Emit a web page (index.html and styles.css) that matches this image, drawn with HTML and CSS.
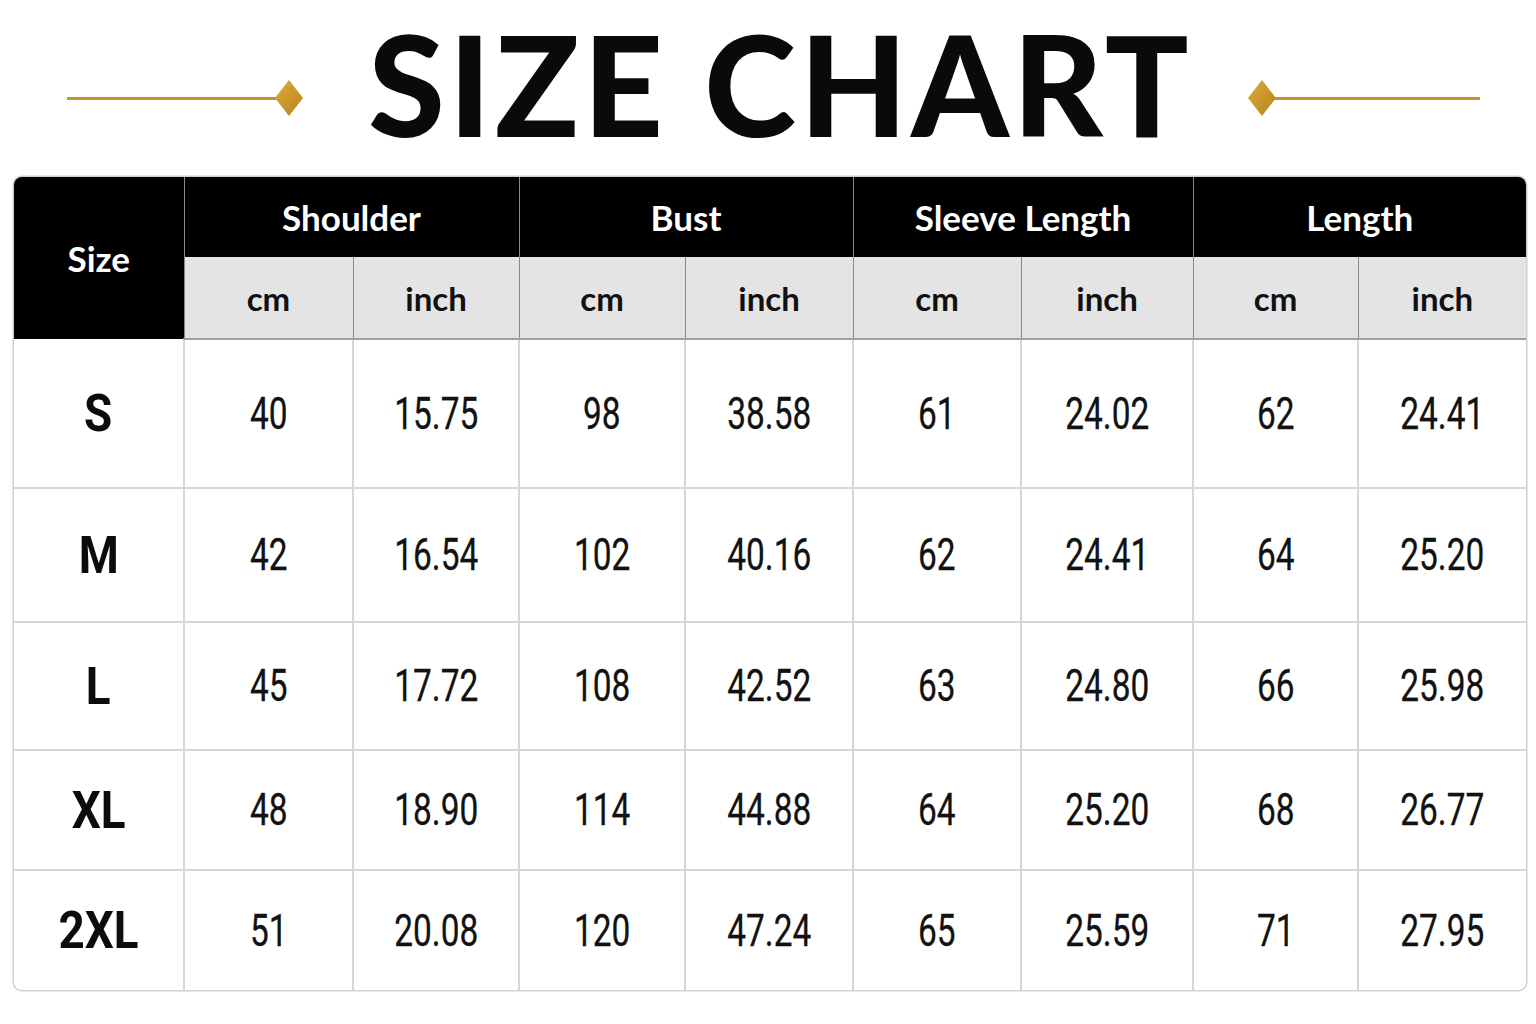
FILE: index.html
```html
<!DOCTYPE html>
<html lang="en">
<head>
<meta charset="utf-8">
<title>Size Chart</title>
<link rel="stylesheet" href="styles.css">
</head>
<body>
<header class="title-bar">
  <div class="ornament ornament-left"><span class="line"></span><span class="diamond"></span></div>
  <h1 class="title">SIZE CHART</h1>
  <div class="ornament ornament-right"><span class="diamond"></span><span class="line"></span></div>
</header>
<div class="chart">
  <table class="size-table">
    <colgroup>
      <col class="c1"><col class="c2"><col class="c3"><col class="c4"><col class="c5"><col class="c6"><col class="c7"><col class="c8"><col class="c9">
    </colgroup>
    <thead>
      <tr class="group-row">
        <th class="size-head" rowspan="2">Size</th>
        <th colspan="2">Shoulder</th>
        <th colspan="2">Bust</th>
        <th colspan="2">Sleeve Length</th>
        <th colspan="2">Length</th>
      </tr>
      <tr class="unit-row">
        <th>cm</th><th>inch</th>
        <th>cm</th><th>inch</th>
        <th>cm</th><th>inch</th>
        <th>cm</th><th>inch</th>
      </tr>
    </thead>
    <tbody>
      <tr class="r-s"><th><span>S</span></th><td><span>40</span></td><td><span>15.75</span></td><td><span>98</span></td><td><span>38.58</span></td><td><span>61</span></td><td><span>24.02</span></td><td><span>62</span></td><td><span>24.41</span></td></tr>
      <tr class="r-m"><th><span>M</span></th><td><span>42</span></td><td><span>16.54</span></td><td><span>102</span></td><td><span>40.16</span></td><td><span>62</span></td><td><span>24.41</span></td><td><span>64</span></td><td><span>25.20</span></td></tr>
      <tr class="r-l"><th><span>L</span></th><td><span>45</span></td><td><span>17.72</span></td><td><span>108</span></td><td><span>42.52</span></td><td><span>63</span></td><td><span>24.80</span></td><td><span>66</span></td><td><span>25.98</span></td></tr>
      <tr class="r-xl"><th><span>XL</span></th><td><span>48</span></td><td><span>18.90</span></td><td><span>114</span></td><td><span>44.88</span></td><td><span>64</span></td><td><span>25.20</span></td><td><span>68</span></td><td><span>26.77</span></td></tr>
      <tr class="r-2xl"><th><span>2XL</span></th><td><span>51</span></td><td><span>20.08</span></td><td><span>120</span></td><td><span>47.24</span></td><td><span>65</span></td><td><span>25.59</span></td><td><span>71</span></td><td><span>27.95</span></td></tr>
    </tbody>
  </table>
</div>
</body>
</html>
```
FILE: styles.css
```css
html, body {
  margin: 0;
  padding: 0;
  background: #ffffff;
}
body {
  width: 1536px;
  height: 1024px;
  overflow: hidden;
  font-family: "Lato", "Noto Sans", sans-serif;
  color: #111;
}
.title-bar {
  height: 177px;
  display: flex;
  align-items: flex-start;
  justify-content: space-between;
  padding: 0 56px 0 67px;
  box-sizing: border-box;
}
.ornament {
  display: flex;
  align-items: center;
  flex: none;
  height: 36px;
  margin-top: 80px;
}
.ornament .line {
  display: block;
  height: 3px;
  background: #c8922a;
}
.ornament-left .line { width: 210px; }
.ornament-right .line { width: 206px; }
.ornament .diamond {
  display: block;
  width: 28px;
  height: 36px;
  background: linear-gradient(135deg, #dcaa3a, #b9841d);
  clip-path: polygon(50% 0, 100% 50%, 50% 100%, 0 50%);
}
.ornament-left .diamond { margin-left: -2px; }
.ornament-right .diamond { margin-right: -2px; }
.title {
  flex: none;
  margin: 0;
  padding: 0 6px 0 16px;
  font-family: "Lato", sans-serif;
  font-weight: 900;
  font-size: 139px;
  line-height: 167px;
  letter-spacing: 4px;
  color: #0a0a0a;
  white-space: nowrap;
}
.chart {
  margin-left: 14px;
  width: 1512px;
  border-radius: 8px;
  overflow: hidden;
  box-shadow: 0 0 0 1.5px #d0d0d0;
}
.size-table {
  width: 1512px;
  table-layout: fixed;
  border-collapse: collapse;
}
.c1 { width: 170px; }
.c2 { width: 169px; }
.c3 { width: 166px; }
.c4 { width: 166px; }
.c5 { width: 168px; }
.c6 { width: 168px; }
.c7 { width: 172px; }
.c8 { width: 165px; }
.c9 { width: 168px; }
.size-table th,
.size-table td {
  padding: 0;
  text-align: center;
  vertical-align: middle;
  box-sizing: border-box;
}
.group-row th {
  height: 80px;
  background: #000;
  color: #fff;
  font-weight: 700;
  font-size: 35px;
  border-left: 1px solid #8a8a8a;
}
.group-row th.size-head {
  border-left: none;
}
.unit-row th {
  height: 82px;
  background: #e4e4e4;
  color: #111;
  font-weight: 700;
  font-size: 33px;
  border-left: 1px solid #8a8a8a;
  border-bottom: 2px solid #a0a0a0;
}
tbody th,
tbody td {
  border: 2px solid #d6d6d6;
  border-top: none;
  padding-top: 5px;
}
tbody tr > :first-child { border-left: none; }
tbody tr > :last-child { border-right: none; }
tbody tr:last-child > * { border-bottom: none; }
tbody td span,
tbody th span {
  display: inline-block;
  font-family: "Roboto", "Liberation Sans", sans-serif;
}
tbody td span {
  font-size: 44px;
  font-weight: 400;
  color: #121212;
  transform: scaleX(0.76);
  -webkit-text-stroke: 0.3px #121212;
}
tbody th span {
  font-size: 52px;
  font-weight: 700;
  color: #0c0c0c;
  transform: scaleX(0.88);
}
.r-s > * { height: 149px; }
.r-m > * { height: 134px; }
.r-l > * { height: 128px; }
.r-xl > * { height: 120px; }
.r-2xl > * { height: 120px; }
```
